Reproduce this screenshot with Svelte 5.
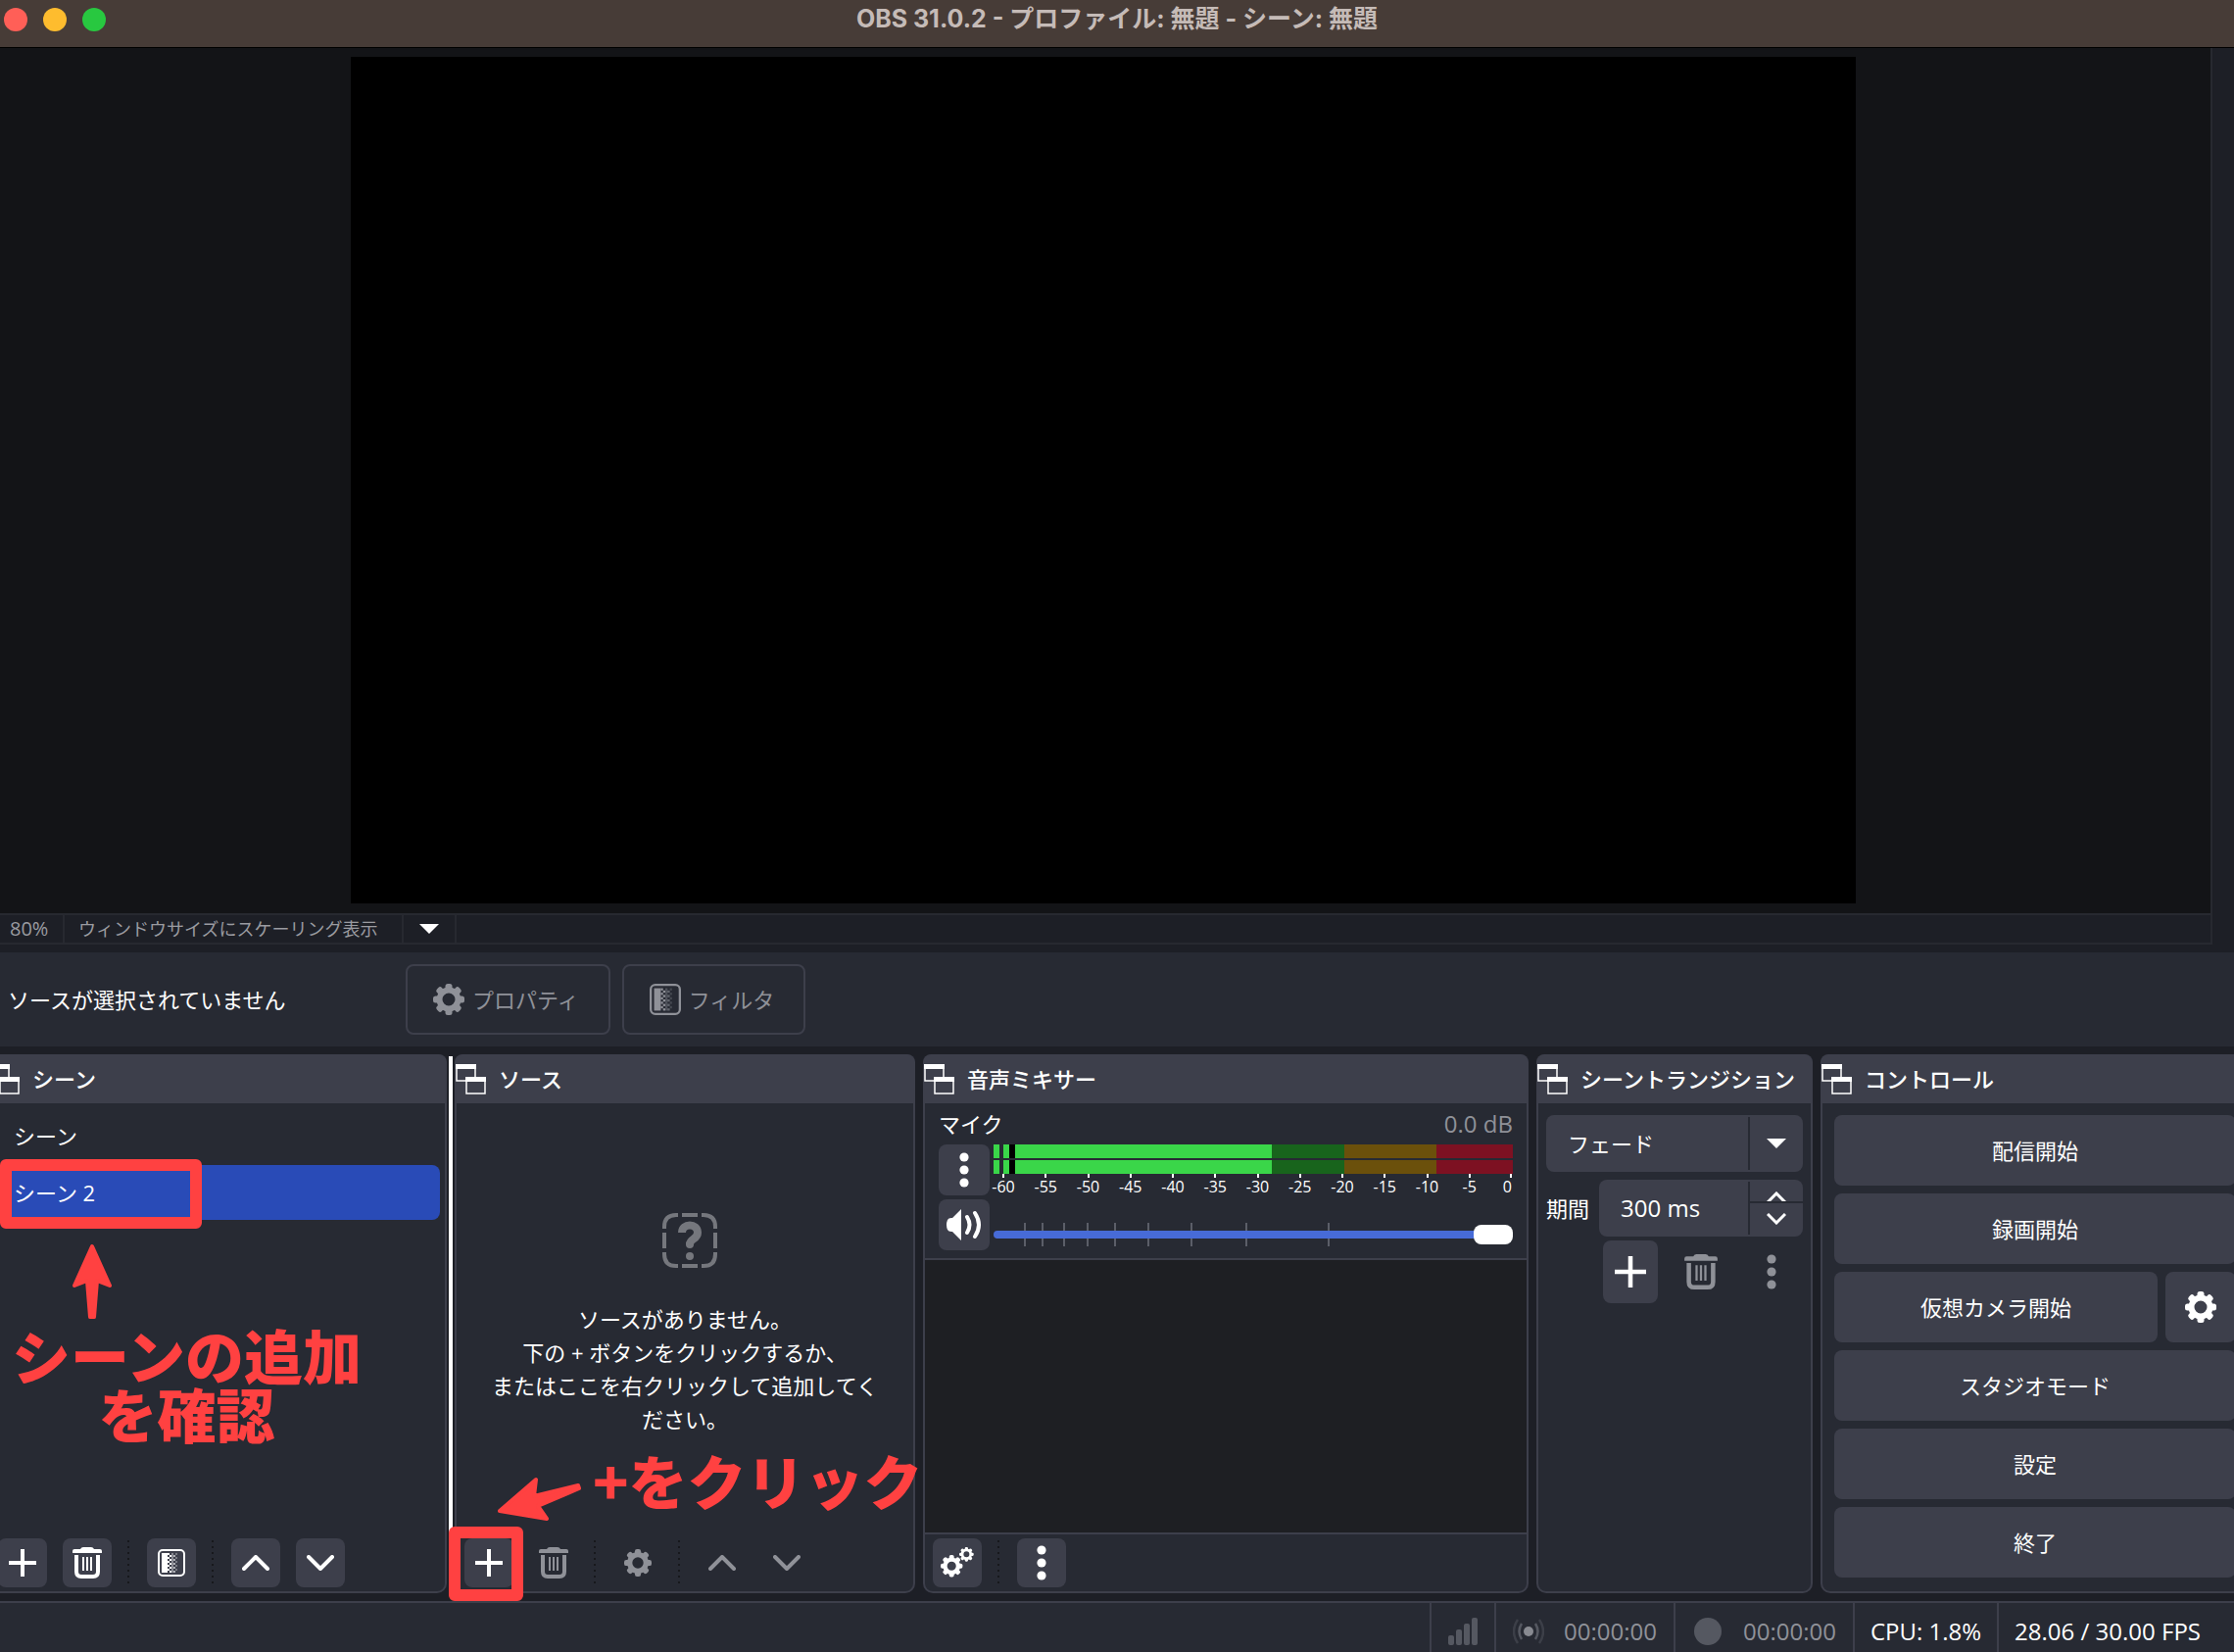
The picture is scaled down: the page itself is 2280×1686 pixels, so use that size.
<script>
  const scenes = ['シーン', 'シーン 2'];
  const dbMarks = [-60, -55, -50, -45, -40, -35, -30, -25, -20, -15, -10, -5, 0];
  const sliderMarks = [5.8, 9.2, 13.4, 17.9, 23.2, 29.6, 37.9, 48.5, 64.3];
  const teeth = [0, 45, 90, 135, 180, 225, 270, 315];
  const rows = [0, 1, 2, 3, 4, 5, 6, 7, 8, 9];

  let selected = $state(1);
  let volume = $state(100);
  let duration = $state('300 ms');
</script>

{#snippet gearShape()}
  <circle cx="16" cy="16" r="9.5" fill="none" stroke="currentColor" stroke-width="6" />
  {#each teeth as deg}
    <rect x="12.5" y="0" width="7" height="7" rx="2.5" fill="currentColor" transform="rotate({deg} 16 16)" />
  {/each}
{/snippet}

{#snippet gear()}
  <svg width="32" height="32" viewBox="0 0 32 32">{@render gearShape()}</svg>
{/snippet}

{#snippet plus(size)}
  <svg width={size} height={size} viewBox="0 0 28 28">
    <path d="M14 0v28M0 14h28" stroke="currentColor" stroke-width="4" />
  </svg>
{/snippet}

{#snippet trash()}
  <svg width="30" height="32" viewBox="0 0 30 32">
    <path d="M0 6V4q0-2 2-2h6q1-2 3-2h8q2 0 3 2h6q2 0 2 2v2z" fill="currentColor" />
    <path d="M4 8v17q0 5 5 5h12q5 0 5-5V8" fill="none" stroke="currentColor" stroke-width="4" />
    <path d="M11 10v14M15 10v14M19 10v14" stroke="currentColor" stroke-width="2" />
  </svg>
{/snippet}

{#snippet filter(size)}
  <svg width={size} height={size} viewBox="0 0 28 28">
    <rect x="1" y="1" width="26" height="26" rx="4" fill="none" stroke="currentColor" stroke-width="2" />
    <rect x="4" y="4" width="6" height="20" fill="currentColor" />
    {#each rows as r}
      <rect x={r % 2 ? 12 : 10} y={4 + r * 2} width="2" height="2" fill="currentColor" />
      <rect x="14" y={4 + r * 2} width={r % 2 ? 4 : 2} height="2" fill="currentColor" opacity="0.4" />
      <rect x={r % 2 ? 16 : 18} y={4 + r * 2} width="2" height="2" fill="currentColor" opacity="0.3" />
    {/each}
  </svg>
{/snippet}

{#snippet chevron(down)}
  <svg width="28" height="16" viewBox="0 0 28 16">
    <path
      d={down ? 'M2 2l12 12L26 2' : 'M2 14L14 2l12 12'}
      fill="none"
      stroke="currentColor"
      stroke-width="4"
      stroke-linecap="round"
      stroke-linejoin="round"
    />
  </svg>
{/snippet}

{#snippet dots()}
  <svg width="10" height="36" viewBox="0 0 10 36">
    <g fill="currentColor">
      <circle cx="5" cy="5" r="4.6" />
      <circle cx="5" cy="18" r="4.6" />
      <circle cx="5" cy="31" r="4.6" />
    </g>
  </svg>
{/snippet}

{#snippet triangle()}
  <svg class="triangle" width="20" height="10" viewBox="0 0 20 10">
    <path d="M0 0h20L10 10z" fill="#fff" />
  </svg>
{/snippet}

{#snippet dockTitle(title)}
  <header class="dock-title">
    <svg width="31" height="31" viewBox="0 0 31 31">
      <path d="M1 4v13h9M20 13V4" fill="none" stroke="#fff" stroke-width="1.5" />
      <path d="M0 0h21v5H0zM10 13h21v5H10z" fill="#fff" />
      <path d="M11 17v13h19V17" fill="none" stroke="#fff" stroke-width="1.5" />
    </svg>
    <h2>{title}</h2>
  </header>
{/snippet}

<div class="window">
  <header class="titlebar">
    <div class="lights">
      <button class="light close" aria-label="閉じる"></button>
      <button class="light minimize" aria-label="最小化"></button>
      <button class="light zoom" aria-label="拡大"></button>
    </div>
    <h1>OBS 31.0.2 - プロファイル: 無題 - シーン: 無題</h1>
  </header>

  <div class="preview-row">
    <div class="preview"><div class="canvas"></div></div>
    <div class="scroll-strip"></div>
  </div>

  <div class="scale-bar">
    <span class="percent">80%</span>
    <div class="scale-select">
      <select aria-label="プレビューのスケーリング">
        <option>ウィンドウサイズにスケーリング表示</option>
      </select>
      {@render triangle()}
    </div>
  </div>

  <div class="context-bar">
    <span class="context-label">ソースが選択されていません</span>
    <button class="outline" disabled>{@render gear()}プロパティ</button>
    <button class="outline" disabled>{@render filter(32)}フィルタ</button>
  </div>

  <main class="dock-area">
    <div class="docks">
      <section class="dock scenes">
        {@render dockTitle('シーン')}
        <ul>
          {#each scenes as scene, i}
            <li>
              <button class="scene" class:selected={selected === i} onclick={() => (selected = i)}>{scene}</button>
            </li>
          {/each}
        </ul>
        <div class="toolbar">
          <button class="tool" aria-label="シーンを追加">{@render plus(28)}</button>
          <button class="tool" aria-label="シーンを削除">{@render trash()}</button>
          <span class="sep"></span>
          <button class="tool" aria-label="シーンフィルタ">{@render filter(28)}</button>
          <span class="sep"></span>
          <button class="tool" aria-label="上へ">{@render chevron(false)}</button>
          <button class="tool" aria-label="下へ">{@render chevron(true)}</button>
        </div>
      </section>

      <div class="splitter"></div>

      <section class="dock sources">
        {@render dockTitle('ソース')}
        <div class="empty">
          <svg width="56" height="56" viewBox="0 0 56 56" fill="none" stroke="#75777d" stroke-width="4">
            <path d="M2 16V14Q2 2 14 2h2M40 2h2q12 0 12 12v2M54 40v2q0 12-12 12h-2M16 54h-2Q2 54 2 42v-2" />
            <path d="M20 2h16M20 54h16M2 20v16M54 20v16" />
            <path d="M20 20c0-10 16-10 16 0 0 7-8 6-8 12" stroke-width="8" />
            <circle cx="28" cy="32" r="4" fill="#75777d" stroke="none" />
            <circle cx="28" cy="44" r="4" fill="#75777d" stroke="none" />
          </svg>
          <p>ソースがありません。<br />下の + ボタンをクリックするか、<br />またはここを右クリックして追加してください。</p>
        </div>
        <div class="toolbar">
          <button class="tool" aria-label="ソースを追加">{@render plus(28)}</button>
          <button class="tool" aria-label="ソースを削除" disabled>{@render trash()}</button>
          <span class="sep"></span>
          <button class="tool small-gear" aria-label="ソースのプロパティ" disabled>{@render gear()}</button>
          <span class="sep"></span>
          <button class="tool" aria-label="ソースを上へ" disabled>{@render chevron(false)}</button>
          <button class="tool" aria-label="ソースを下へ" disabled>{@render chevron(true)}</button>
        </div>
      </section>

      <section class="dock mixer">
        {@render dockTitle('音声ミキサー')}
        <div class="channel">
          <div class="channel-head">
            <label for="mic-volume">マイク</label>
            <output>0.0 dB</output>
          </div>
          <div class="channel-body">
            <div class="channel-buttons">
              <button class="tool" aria-label="マイクのメニュー">{@render dots()}</button>
              <button class="tool" aria-label="ミュート">
                <svg width="38" height="32" viewBox="0 0 38 32">
                  <path d="M2 11q1-2 4-2h1l9-9v32l-9-9H6q-3 0-4-2-2-5 0-10z" fill="currentColor" />
                  <path
                    d="M22 8q5 8 0 16M30 4q8 12 0 24"
                    fill="none"
                    stroke="currentColor"
                    stroke-width="4"
                    stroke-linecap="round"
                  />
                </svg>
              </button>
            </div>
            <div class="levels">
              <div class="meter"></div>
              <div class="meter"></div>
              <div class="marks">
                {#each dbMarks as mark}
                  <span>{mark}</span>
                {/each}
              </div>
              <div class="slider">
                {#each sliderMarks as left}
                  <i style="left: {left}%"></i>
                {/each}
                <input id="mic-volume" type="range" min="0" max="100" bind:value={volume} />
              </div>
            </div>
          </div>
        </div>
        <div class="mixer-space"></div>
        <div class="toolbar">
          <button class="tool" aria-label="オーディオの詳細プロパティ">
            <svg width="34" height="32" viewBox="0 0 34 32">
              <g transform="translate(0 8) scale(0.7)">{@render gearShape()}</g>
              <g transform="translate(19 0) scale(0.46)">{@render gearShape()}</g>
            </svg>
          </button>
          <span class="sep"></span>
          <button class="tool" aria-label="ミキサーのメニュー">{@render dots()}</button>
        </div>
      </section>

      <section class="dock transitions">
        {@render dockTitle('シーントランジション')}
        <div class="transition-body">
          <div class="combo">
            <select aria-label="トランジション">
              <option>フェード</option>
            </select>
            {@render triangle()}
          </div>
          <div class="duration">
            <label for="duration">期間</label>
            <div class="spin">
              <input id="duration" type="text" bind:value={duration} />
              <div class="spin-buttons">
                <button aria-label="増やす">
                  <svg width="20" height="10" viewBox="0 0 20 10">
                    <path d="M1 11l9-9 9 9" fill="none" stroke="#fff" stroke-width="3" />
                  </svg>
                </button>
                <button aria-label="減らす">
                  <svg width="20" height="12" viewBox="0 0 20 12">
                    <path d="M1 1l9 9 9-9" fill="none" stroke="#fff" stroke-width="3" />
                  </svg>
                </button>
              </div>
            </div>
          </div>
          <div class="transition-tools">
            <button class="tool" aria-label="トランジションを追加">{@render plus(32)}</button>
            <button class="tool" aria-label="トランジションを削除" disabled>
              {@render trash()}
            </button>
            <button class="tool" aria-label="トランジションのメニュー" disabled>{@render dots()}</button>
          </div>
        </div>
      </section>

      <section class="dock controls">
        {@render dockTitle('コントロール')}
        <div class="control-list">
          <button>配信開始</button>
          <button>録画開始</button>
          <div class="camera">
            <button>仮想カメラ開始</button>
            <button aria-label="仮想カメラの設定">{@render gear()}</button>
          </div>
          <button>スタジオモード</button>
          <button>設定</button>
          <button>終了</button>
        </div>
      </section>
    </div>

    <!-- tutorial callouts drawn over the docks -->
    <div class="callout-box scene-box"></div>
    <div class="callout-box add-box"></div>
    <svg class="callout-arrow scene-arrow" width="44" height="80" viewBox="0 0 44 80">
      <path d="M22 4L40 44 27 39 24 76h-4L17 39 4 44z" />
    </svg>
    <svg class="callout-arrow add-arrow" width="90" height="48" viewBox="0 0 90 48">
      <path d="M4 36L41 4l-2 17 45-11 1 3-42 18 9 13z" />
    </svg>
    <p class="callout-text scene-text">シーンの追加<br />を確認</p>
    <p class="callout-text add-text">+をクリック</p>
  </main>

  <footer class="status">
    <div class="cell signal">
      <svg width="30" height="28" viewBox="0 0 30 28" fill="#555861">
        <rect x="0" y="18" width="6" height="10" rx="2" />
        <rect x="8" y="12" width="6" height="16" rx="2" />
        <rect x="16" y="6" width="6" height="22" rx="2" />
        <rect x="24" y="0" width="6" height="28" rx="2" />
      </svg>
    </div>
    <div class="cell timer">
      <svg width="32" height="28" viewBox="0 0 32 28" fill="none" stroke="#555861" stroke-width="2.5">
        <circle cx="16" cy="14" r="5" fill="#888a91" stroke="none" />
        <path d="M9 6q-5 8 0 16M23 6q5 8 0 16" />
        <path d="M5 2q-8 12 0 24M27 2q8 12 0 24" stroke="#3c3f48" />
      </svg>
      <span>00:00:00</span>
    </div>
    <div class="cell timer">
      <svg width="32" height="28" viewBox="0 0 32 28"><circle cx="16" cy="14" r="14" fill="#555861" /></svg>
      <span>00:00:00</span>
    </div>
    <div class="cell cpu">CPU: 1.8%</div>
    <div class="cell fps">28.06 / 30.00 FPS</div>
  </footer>
</div>

<style>
  :global(body) {
    margin: 0;
    background: #1d1f26;
  }

  .window {
    display: flex;
    flex-direction: column;
    height: 100vh;
    overflow: hidden;
    background: #1d1f26;
    color: #fff;
    font-family: 'Open Sans', 'Noto Sans CJK JP', sans-serif;
    font-size: 22px;
    line-height: 34px;
  }

  h1,
  h2,
  p,
  ul {
    margin: 0;
    padding: 0;
  }

  svg {
    display: block;
    flex: none;
  }

  button,
  select,
  input {
    margin: 0;
    padding: 0;
    border: 0;
    border-radius: 8px;
    background: #3d3f4b;
    color: inherit;
    font: inherit;
  }

  button {
    display: flex;
    align-items: center;
    justify-content: center;
  }

  select {
    appearance: none;
  }

  /* title bar */
  .titlebar {
    display: grid;
    grid-template-columns: 1fr auto 1fr;
    height: 48px;
    background: #473c37;
    border-bottom: 1px solid #000;
  }

  .lights {
    display: flex;
    gap: 16px;
    padding: 8px 4px;
  }

  .light {
    width: 24px;
    height: 24px;
    border-radius: 50%;
  }

  .close {
    background: #ff5f57;
  }

  .minimize {
    background: #febc2e;
  }

  .zoom {
    background: #28c840;
  }

  h1 {
    color: #c5bbb7;
    font-family: Inter, 'Noto Sans CJK JP', sans-serif;
    font-size: 25px;
    font-weight: 700;
    line-height: 38px;
  }

  /* preview */
  .preview-row {
    display: flex;
    flex: 1;
    min-height: 0;
  }

  .preview {
    display: flex;
    flex: 1;
    justify-content: center;
    box-sizing: border-box;
    padding: 9px 4px 10px 0;
    background: #131417;
  }

  .canvas {
    height: 100%;
    aspect-ratio: 16 / 9;
    background: #000;
  }

  .scroll-strip {
    width: 22px;
    border-left: 2px solid #272930;
    background: #1d1f26;
  }

  .scale-bar {
    display: flex;
    height: 28px;
    margin: 0 22px 8px 0;
    border: 2px solid #272930;
    border-left: 0;
    color: #9a9ba0;
    line-height: 28px;
  }

  .percent {
    width: 54px;
    padding-left: 10px;
    border-right: 2px solid #272930;
    font-size: 20px;
  }

  .scale-select {
    display: flex;
    align-items: center;
    padding-right: 16px;
    border-right: 2px solid #272930;
  }

  .scale-select select {
    width: 346px;
    height: 28px;
    margin-right: 16px;
    padding-left: 14px;
    border-right: 2px solid #272930;
    border-radius: 0;
    background: none;
    font-size: 18px;
  }

  .context-bar {
    display: flex;
    align-items: center;
    gap: 12px;
    height: 96px;
    background: #272a33;
  }

  .context-label {
    width: 394px;
    padding-left: 8px;
  }

  .outline {
    gap: 8px;
    height: 72px;
    padding: 0 30px 0 26px;
    border: 2px solid #3d3f4b;
    background: none;
    color: #8f9198;
  }

  /* docks */
  .dock-area {
    position: relative;
    padding: 8px 0;
    overflow: hidden;
  }

  .docks {
    display: flex;
    gap: 8px;
    margin: 0 -16px 0 -12px;
  }

  .dock {
    display: flex;
    flex-direction: column;
    box-sizing: border-box;
    min-width: 0;
    border: 2px solid #3d3f4b;
    border-top: 0;
    border-radius: 10px;
    background: #272a33;
  }

  .scenes {
    flex: 468 1 468px;
  }

  .sources {
    flex: 470 1 470px;
  }

  .mixer {
    flex: 618 1 618px;
  }

  .transitions {
    flex: 282 1 282px;
  }

  .controls {
    flex: 438 1 438px;
  }

  .splitter {
    width: 4px;
    margin: 2px -6px 0;
    background: #fff;
  }

  .dock-title {
    display: flex;
    align-items: center;
    gap: 13px;
    height: 50px;
    margin: 0 -2px;
    padding-left: 1px;
    border-radius: 8px 8px 0 0;
    background: #3d3f4b;
    white-space: nowrap;
  }

  h2 {
    font-size: 22px;
    font-weight: 500;
  }

  .toolbar {
    display: flex;
    gap: 16px;
    padding: 4px 8px;
  }

  .tool {
    width: 50px;
    height: 50px;
  }

  .tool:disabled {
    background: none;
    color: #8f9198;
  }

  .small-gear svg {
    width: 28px;
    height: 28px;
  }

  .sep {
    width: 4px;
    margin: 2px 0;
    background: repeating-linear-gradient(#17181c 0 2px, transparent 2px 6px) 0 0 / 2px 100% no-repeat;
  }

  ul {
    flex: 1;
    padding: 5px;
    list-style: none;
  }

  .scene {
    justify-content: flex-start;
    width: 100%;
    height: 56px;
    margin-bottom: 2px;
    padding-left: 19px;
    background: none;
  }

  .scene.selected {
    background: #294bb7;
  }

  .empty {
    display: flex;
    flex: 1;
    flex-direction: column;
    align-items: center;
    gap: 35px;
    padding-top: 112px;
  }

  .empty svg {
    margin-left: 10px;
  }

  .empty p {
    max-width: 400px;
    text-align: center;
  }

  /* mixer */
  .channel {
    padding: 0 14px 8px;
    border-bottom: 2px solid #3d3f4b;
  }

  .channel-head {
    display: flex;
    align-items: center;
    justify-content: space-between;
    height: 42px;
  }

  output {
    color: #8f9198;
    font-size: 24px;
  }

  .channel-body {
    display: flex;
    gap: 4px;
  }

  .channel-buttons {
    display: flex;
    flex-direction: column;
    gap: 4px;
  }

  .channel-buttons .tool {
    width: 52px;
    height: 52px;
  }

  .levels {
    flex: 1;
  }

  .meter {
    height: 14px;
    background: linear-gradient(
      to right,
      #3ad649 1.1%,
      #272a33 1.1% 1.9%,
      #3ad649 1.9% 3%,
      #000 3% 4.2%,
      #3ad649 4.2% 53.6%,
      #18641c 53.6% 67.5%,
      #6b500b 67.5% 85.3%,
      #7d1122 85.3%
    );
  }

  .meter + .meter {
    margin-top: 2px;
  }

  .marks {
    display: flex;
    justify-content: space-between;
    margin-bottom: 28px;
    padding: 0 1px 0 10px;
    font-size: 16px;
    line-height: 18px;
  }

  .marks span {
    display: flex;
    flex-direction: column;
    align-items: center;
    width: 0;
  }

  .marks span:last-child {
    align-items: flex-end;
  }

  .marks span::before {
    content: '';
    width: 2px;
    height: 4px;
    background: #fff;
  }

  .slider {
    position: relative;
    display: flex;
    align-items: center;
    height: 24px;
  }

  .slider i {
    position: absolute;
    width: 2px;
    height: 24px;
    background: #5b5e68;
  }

  .slider input {
    position: relative;
    appearance: none;
    width: 100%;
    height: 8px;
    border-radius: 4px;
    background: #476bd7;
  }

  .slider input::-webkit-slider-thumb {
    appearance: none;
    width: 40px;
    height: 20px;
    border-radius: 8px;
    background: #fff;
  }

  .mixer-space {
    flex: 1;
    background: #1e1f23;
  }

  .mixer .toolbar {
    border-top: 2px solid #3d3f4b;
  }

  /* transitions */
  .transition-body {
    padding: 12px 8px;
  }

  .combo {
    display: flex;
    align-items: center;
    height: 58px;
    border-radius: 8px;
    background: #3d3f4b;
  }

  .combo select {
    flex: 1;
    height: 54px;
    margin-right: 17px;
    padding-left: 22px;
    border-right: 2px solid #272a33;
    border-radius: 0;
    background: none;
  }

  .combo .triangle {
    margin-right: 17px;
  }

  .triangle {
    pointer-events: none;
  }

  .duration {
    display: flex;
    align-items: center;
    gap: 10px;
    margin-top: 8px;
  }

  .duration label {
    flex: none;
  }

  .spin {
    display: flex;
    flex: 1;
    height: 58px;
    min-width: 0;
    border-radius: 8px;
    background: #3d3f4b;
  }

  .spin input {
    flex: 1;
    min-width: 0;
    padding-left: 22px;
    background: none;
    font-size: 24px;
  }

  .spin-buttons {
    display: flex;
    flex-direction: column;
    width: 54px;
    margin: 2px 0;
    border-left: 2px solid #272a33;
  }

  .spin-buttons button {
    background: none;
  }

  .spin-buttons button:first-child {
    align-items: flex-end;
    height: 22px;
    border-bottom: 2px solid #272a33;
    border-radius: 0;
  }

  .spin-buttons button:last-child {
    flex: 1;
  }

  .transition-tools {
    display: flex;
    justify-content: flex-end;
    gap: 16px;
    margin-top: 4px;
    padding-right: 4px;
  }

  .transition-tools .tool {
    width: 56px;
    height: 64px;
  }

  .transition-tools .tool:nth-child(2) svg {
    width: 34px;
    height: 36px;
  }

  /* controls */
  .control-list {
    display: flex;
    flex-direction: column;
    gap: 8px;
    padding: 12px 12px 14px;
  }

  .control-list button {
    height: 72px;
  }

  .camera {
    display: flex;
    gap: 8px;
  }

  .camera button:first-child {
    flex: 1;
  }

  .camera button:last-child {
    width: 72px;
  }

  /* callouts */
  .callout-box,
  .callout-arrow,
  .callout-text {
    position: absolute;
    pointer-events: none;
  }

  .callout-box {
    box-sizing: border-box;
    border: 12px solid #ff4141;
    border-radius: 6px;
  }

  .scene-box {
    top: 115px;
    left: 0;
    width: 206px;
    height: 71px;
  }

  .add-box {
    top: 490px;
    left: 458px;
    width: 76px;
    height: 76px;
  }

  .callout-arrow {
    fill: #ff4141;
    stroke: #ff4141;
    stroke-width: 4;
    stroke-linejoin: round;
  }

  .scene-arrow {
    top: 200px;
    left: 72px;
  }

  .add-arrow {
    top: 438px;
    left: 506px;
  }

  .callout-text {
    color: #ff4141;
    font-family: 'Noto Sans CJK JP', sans-serif;
    font-size: 60px;
    font-weight: 900;
    line-height: 60px;
    text-align: center;
    white-space: nowrap;
  }

  .scene-text {
    top: 284px;
    left: 12px;
  }

  .add-text {
    top: 412px;
    left: 605px;
  }

  /* status bar */
  .status {
    display: flex;
    justify-content: flex-end;
    height: 50px;
    border-top: 2px solid #3d3f4b;
    background: #272a33;
    font-size: 24px;
  }

  .cell {
    display: flex;
    align-items: center;
    padding: 8px 16px 0;
    border-left: 2px solid #3d3f4b;
  }

  .signal,
  .timer {
    padding-right: 17px;
    padding-left: 17px;
  }

  .timer {
    gap: 20px;
    color: #8f9198;
  }

  .fps {
    padding-right: 34px;
  }
</style>
